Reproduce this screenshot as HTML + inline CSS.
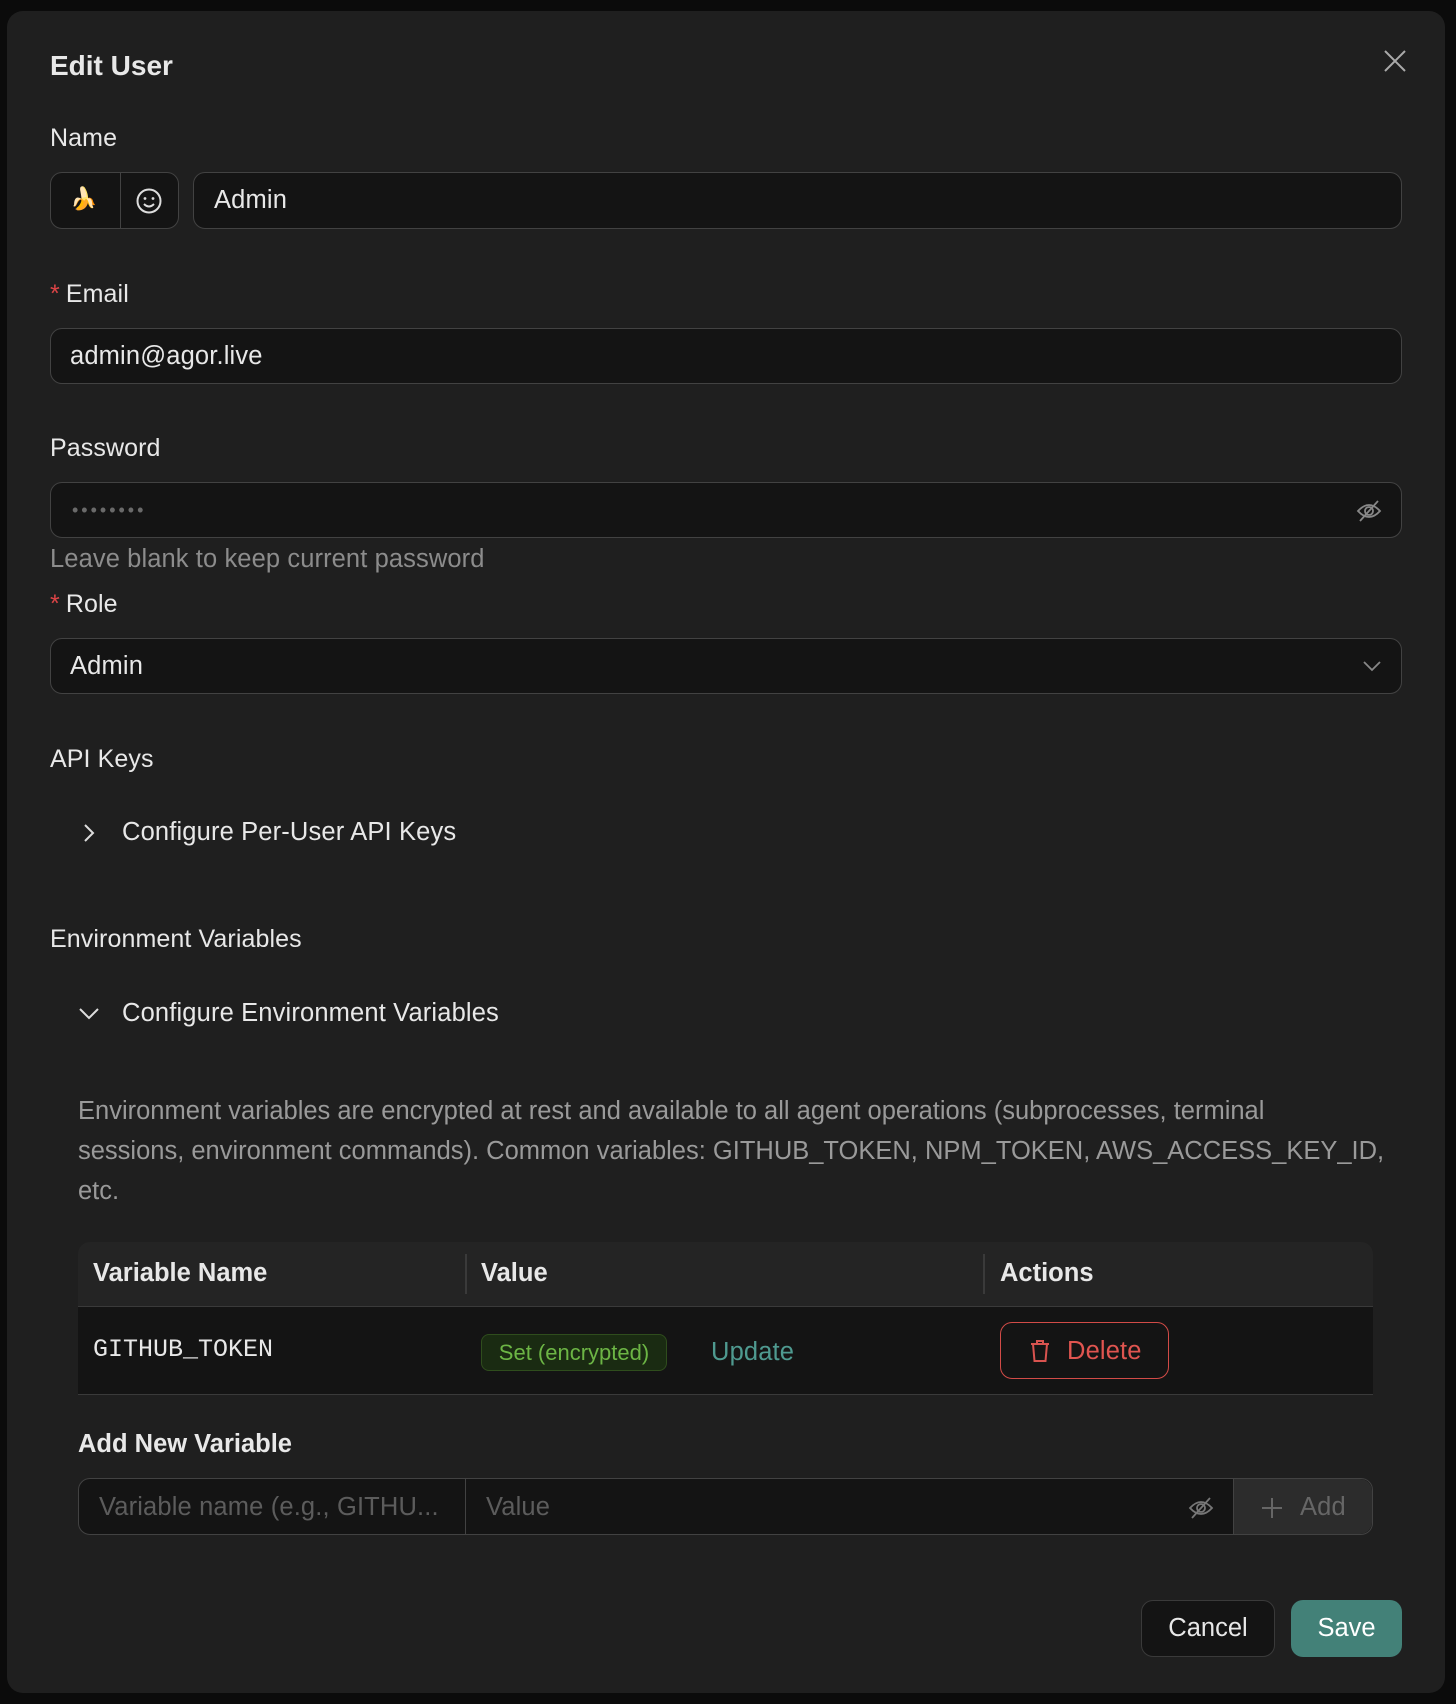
<!DOCTYPE html>
<html><head><meta charset="utf-8"><style>
*{box-sizing:border-box;margin:0;padding:0}
body{width:1456px;height:1704px;background:#0b0b0b;font-family:"Liberation Sans",sans-serif;color:#e8e8e8;position:relative;overflow:hidden}
.m{position:absolute;left:7px;top:11px;width:1438px;height:1682px;background:#1f1f1f;border-radius:16px}
.a{position:absolute}
.lbl{font-size:25px;letter-spacing:.1px;color:#e8e8e8}
.req{color:#dc4446;margin-right:6px}
.inp{position:absolute;background:#141414;border:1px solid #424242;border-radius:12px}
.t{font-size:25.5px;letter-spacing:.15px;white-space:nowrap}
</style></head><body>
<div class="m"></div>
<div class="a" style="left:50px;top:50px;font-size:28px;font-weight:bold">Edit User</div>
<svg class="a" style="left:1383px;top:49px" width="24" height="24" viewBox="0 0 24 24"><path d="M2 2L22 22M22 2L2 22" stroke="#aaa" stroke-width="2"/></svg>

<div class="a lbl" style="left:50px;top:124px">Name</div>
<div class="inp" style="left:50px;top:172px;width:129px;height:57px"></div>
<div class="a" style="left:120px;top:172px;width:1px;height:57px;background:#424242"></div>
<div class="a" style="left:70px;top:186px;font-size:22px">🍌</div>
<svg class="a" style="left:135px;top:187px" width="28" height="28" viewBox="0 0 28 28"><circle cx="14" cy="14" r="11.5" fill="none" stroke="#ddd" stroke-width="2"/><circle cx="10" cy="11.5" r="1.4" fill="#ddd"/><circle cx="18" cy="11.5" r="1.4" fill="#ddd"/><path d="M9 17q5 5 10 0" fill="none" stroke="#ddd" stroke-width="2"/></svg>
<div class="inp" style="left:193px;top:172px;width:1209px;height:57px"></div>
<div class="a t" style="left:214px;top:186px">Admin</div>

<div class="a lbl" style="left:50px;top:280px"><span class="req">*</span>Email</div>
<div class="inp" style="left:50px;top:328px;width:1352px;height:56px"></div>
<div class="a t" style="left:70px;top:342px">admin@agor.live</div>

<div class="a lbl" style="left:50px;top:434px">Password</div>
<div class="inp" style="left:50px;top:482px;width:1352px;height:56px"></div>
<div class="a" style="left:72px;top:500px;font-size:18px;color:#6a6a6a;letter-spacing:3px">••••••••</div>
<svg class="a" style="left:1356px;top:498px" width="26" height="26" viewBox="0 0 26 26" fill="none" stroke="#888" stroke-width="1.8"><path d="M2 13q11-12 22 0q-11 12-22 0z"/><circle cx="13" cy="13" r="4"/><path d="M4 23L22 3"/></svg>
<div class="a t" style="left:50px;top:545px;color:#8c8c8c;font-size:25.5px;letter-spacing:.1px">Leave blank to keep current password</div>

<div class="a lbl" style="left:50px;top:590px"><span class="req">*</span>Role</div>
<div class="inp" style="left:50px;top:638px;width:1352px;height:56px"></div>
<div class="a t" style="left:70px;top:652px">Admin</div>
<svg class="a" style="left:1362px;top:659px" width="20" height="14" viewBox="0 0 20 14"><path d="M2 3l8 8 8-8" fill="none" stroke="#888" stroke-width="1.8"/></svg>

<div class="a lbl" style="left:50px;top:745px">API Keys</div>
<svg class="a" style="left:82px;top:823px" width="14" height="20" viewBox="0 0 14 20"><path d="M3 2l8 8-8 8" fill="none" stroke="#ddd" stroke-width="2"/></svg>
<div class="a t" style="left:122px;top:818px">Configure Per-User API Keys</div>

<div class="a lbl" style="left:50px;top:925px">Environment Variables</div>
<svg class="a" style="left:78px;top:1006px" width="22" height="14" viewBox="0 0 22 14"><path d="M2 3l9 9 9-9" fill="none" stroke="#ddd" stroke-width="2"/></svg>
<div class="a t" style="left:122px;top:999px">Configure Environment Variables</div>

<div class="a" style="left:78px;top:1091px;width:1360px;font-size:25.5px;letter-spacing:0;line-height:40px;color:#9a9a9a;white-space:nowrap">Environment variables are encrypted at rest and available to all agent operations (subprocesses, terminal<br>sessions, environment commands). Common variables: GITHUB_TOKEN, NPM_TOKEN, AWS_ACCESS_KEY_ID,<br>etc.</div>

<div class="a" style="left:78px;top:1242px;width:1295px;height:65px;background:#242424;border-radius:12px 12px 0 0;border-bottom:1px solid #3a3a3a"></div>
<div class="a" style="left:465px;top:1254px;width:2px;height:40px;background:#3a3a3a"></div>
<div class="a" style="left:983px;top:1254px;width:2px;height:40px;background:#3a3a3a"></div>
<div class="a t" style="left:93px;top:1259px;font-weight:bold;letter-spacing:0">Variable Name</div>
<div class="a t" style="left:481px;top:1259px;font-weight:bold;letter-spacing:0">Value</div>
<div class="a t" style="left:1000px;top:1259px;font-weight:bold;letter-spacing:0">Actions</div>
<div class="a" style="left:78px;top:1307px;width:1295px;height:88px;background:#141414;border-bottom:1px solid #3a3a3a"></div>
<div class="a t" style="left:93px;top:1335px;font-family:'Liberation Mono',monospace;font-size:25px;letter-spacing:0">GITHUB_TOKEN</div>
<div class="a" style="left:481px;top:1334px;width:186px;height:37px;background:#1a2b12;border:1px solid #2f4d1d;border-radius:8px;color:#6cb545;font-size:22px;text-align:center;line-height:35px">Set (encrypted)</div>
<div class="a t" style="left:711px;top:1338px;color:#4f9a90">Update</div>
<div class="a" style="left:1000px;top:1322px;width:169px;height:57px;border:1.5px solid #d24b47;border-radius:12px"></div>
<svg class="a" style="left:1028px;top:1339px" width="24" height="24" viewBox="0 0 24 24" fill="none" stroke="#d9534f" stroke-width="2"><path d="M3 5h18M9 5V2h6v3M5 5l1.5 17h11L19 5"/></svg>
<div class="a t" style="left:1067px;top:1337px;color:#e05550">Delete</div>

<div class="a t" style="left:78px;top:1430px;font-weight:bold;letter-spacing:0">Add New Variable</div>
<div class="inp" style="left:78px;top:1478px;width:1295px;height:57px"></div>
<div class="a" style="left:465px;top:1478px;width:1px;height:57px;background:#424242"></div>
<div class="a" style="left:1233px;top:1479px;width:139px;height:55px;background:#2c2c2c;border-radius:0 12px 12px 0;border-left:1px solid #424242"></div>
<div class="a t" style="left:99px;top:1493px;color:#5c5c5c">Variable name (e.g., GITHU...</div>
<div class="a t" style="left:486px;top:1493px;color:#5c5c5c">Value</div>
<svg class="a" style="left:1188px;top:1495px" width="26" height="26" viewBox="0 0 26 26" fill="none" stroke="#777" stroke-width="1.8"><path d="M2 13q11-12 22 0q-11 12-22 0z"/><circle cx="13" cy="13" r="4"/><path d="M4 23L22 3"/></svg>
<svg class="a" style="left:1261px;top:1497px" width="22" height="22" viewBox="0 0 22 22"><path d="M11 1v20M1 11h20" stroke="#666" stroke-width="2"/></svg>
<div class="a t" style="left:1300px;top:1493px;color:#666">Add</div>

<div class="a" style="left:1141px;top:1600px;width:134px;height:57px;background:#141414;border:1px solid #3a3a3a;border-radius:12px;font-size:25.5px;text-align:center;line-height:55px">Cancel</div>
<div class="a" style="left:1291px;top:1600px;width:111px;height:57px;background:#438178;border-radius:12px;font-size:25.5px;text-align:center;line-height:57px;color:#fff">Save</div>
</body></html>
